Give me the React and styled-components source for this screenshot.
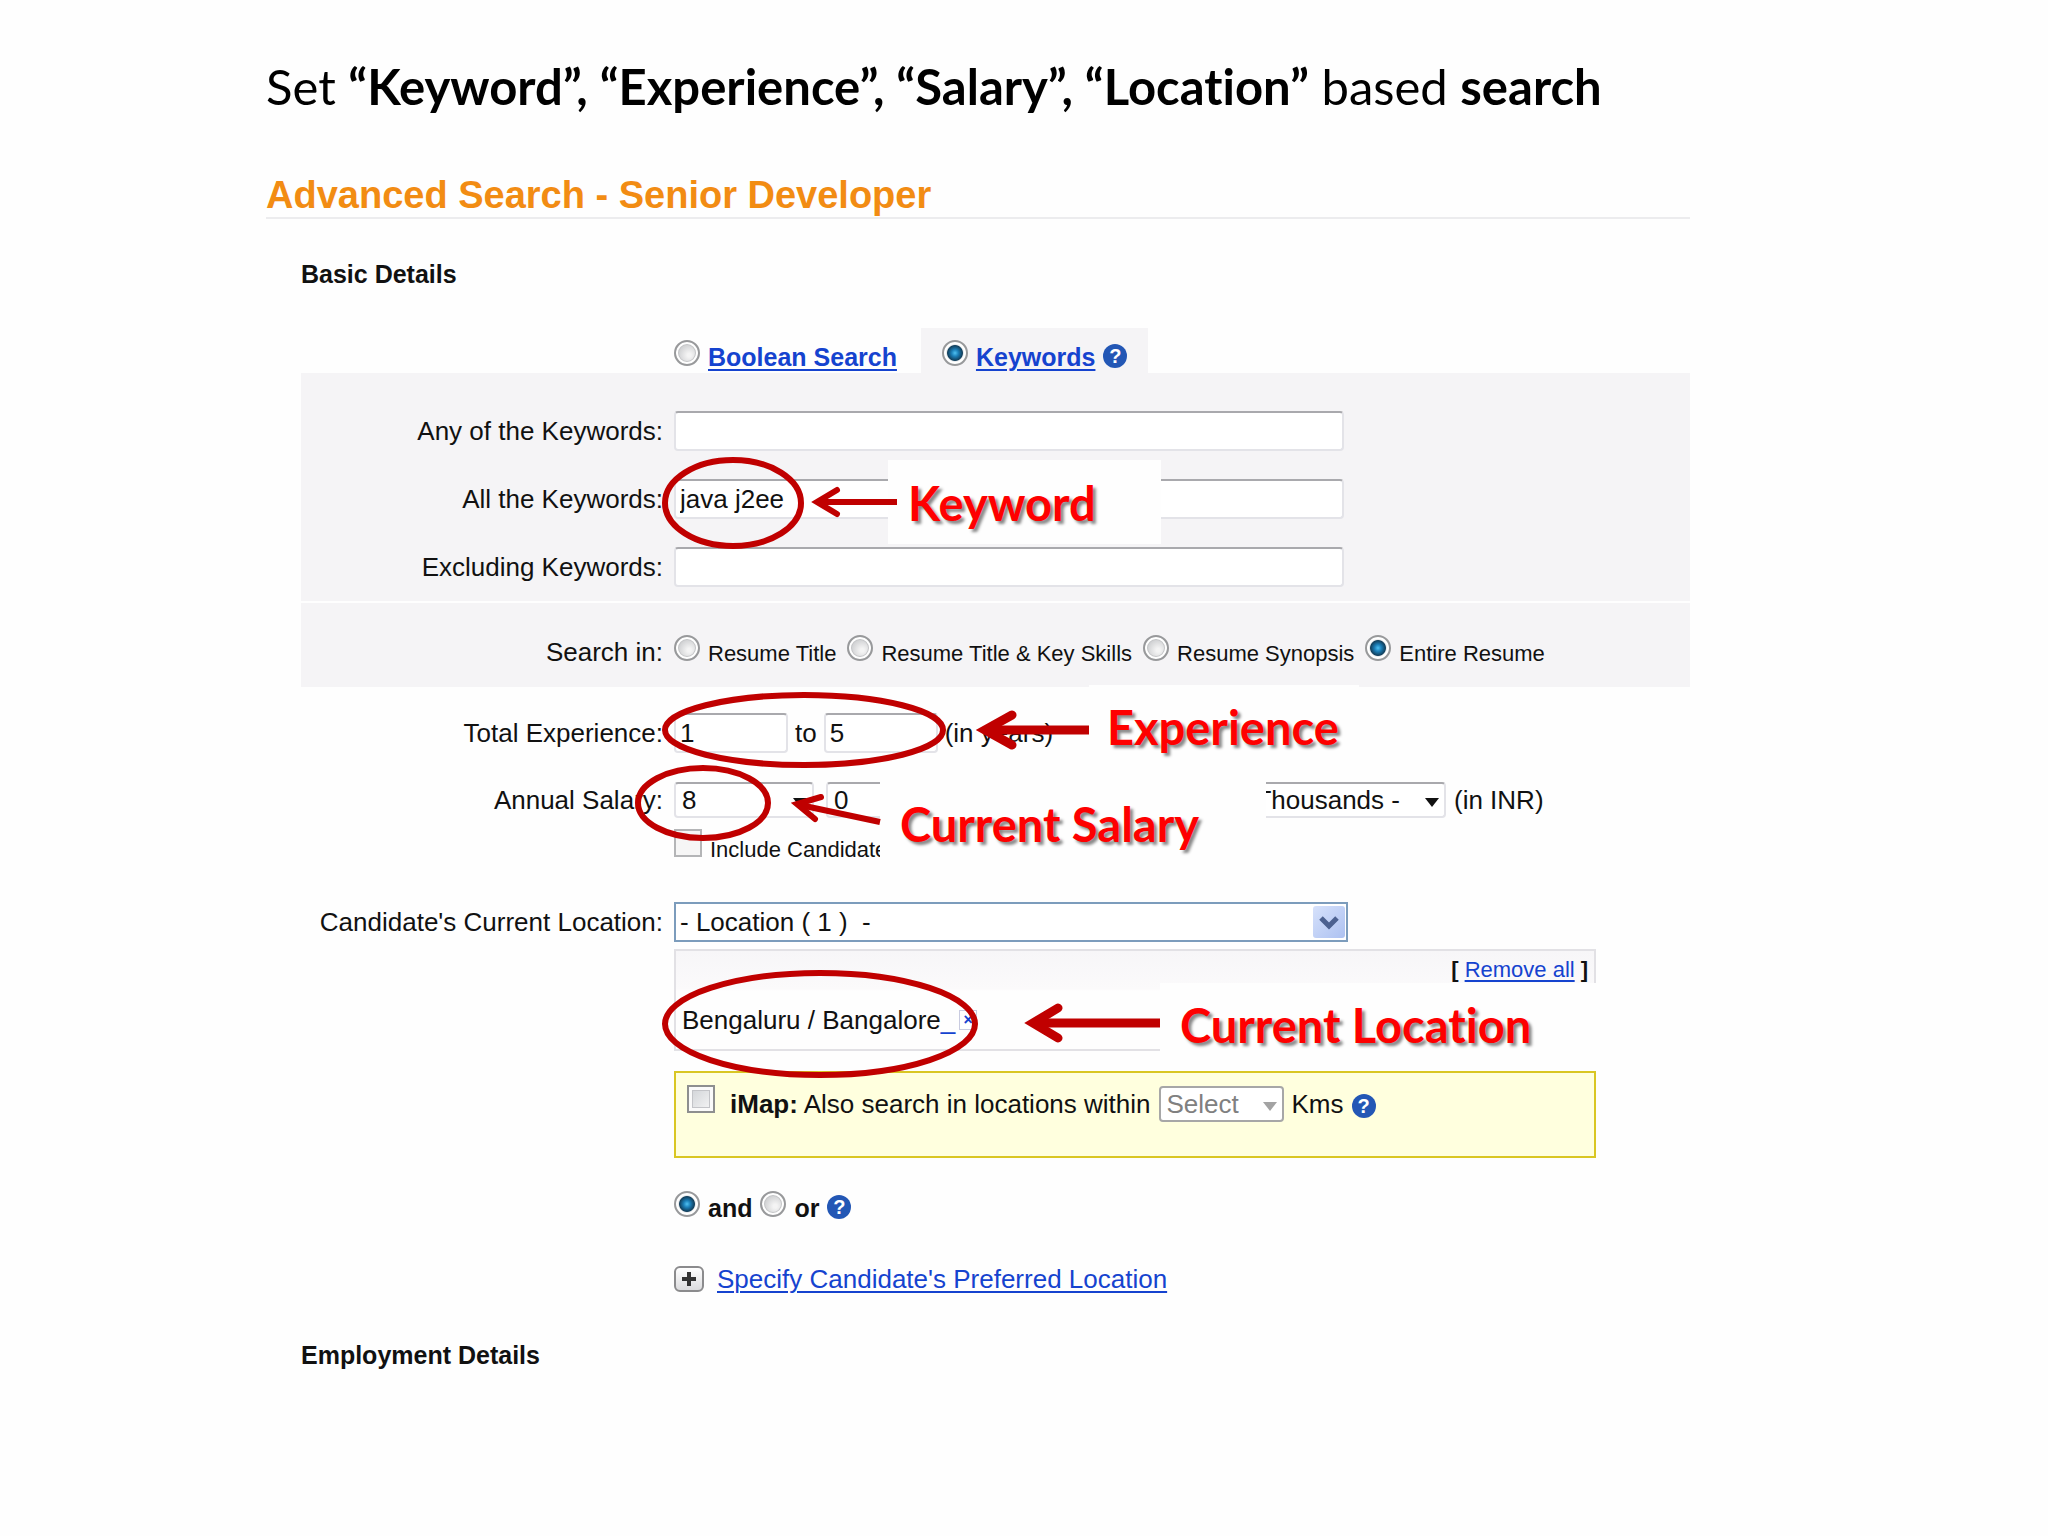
import React from "react";
import styled, { createGlobalStyle } from "styled-components";

const GlobalStyle = createGlobalStyle`
  * {
    box-sizing: border-box;
  }
  body {
    margin: 0;
    background: #fefefe;
    color: #111;
    font-family: "Liberation Sans", Arial, sans-serif;
    font-size: 26px;
    line-height: 30px;
  }
`;

const Slide = styled.main`
  padding: 58px 358px 120px 266px;
`;

const Headline = styled.h1`
  margin: 0;
  font-family: Lato, sans-serif;
  font-size: 49px;
  line-height: 56px;
  font-weight: 400;
  font-variant-ligatures: none;
  color: #000;
  white-space: nowrap;
`;

const PageTitle = styled.h2`
  margin: 60px 0 0;
  border-bottom: 2px solid #ececee;
  font-size: 38px;
  line-height: 43px;
  color: #f28c13;
`;

const Form = styled.form`
  position: relative;
  padding: 40px 0 0 35px;
`;

const SectionTitle = styled.h3`
  margin: ${(props) => props.$top}px 0 0;
  font-size: 25px;
  line-height: 30px;
`;

const Tabs = styled.div`
  display: flex;
  height: 45px;
  margin-top: 39px;
  padding-left: 373px;
`;

const Tab = styled.div`
  display: flex;
  align-items: center;
  gap: 8px;
  padding: ${(props) => (props.$active ? "11px 21px 0 21px" : "11px 24px 0 0")};
  background: ${(props) => (props.$active ? "#f5f4f6" : "transparent")};
`;

const Link = styled.a`
  color: #1543cf;
  text-decoration: underline;
  text-decoration-thickness: 2px;
  text-underline-offset: 3px;
`;

const Panel = styled.div`
  display: flex;
  flex-direction: column;
  gap: 28px;
  margin-bottom: 2px;
  padding: ${(props) => props.$padding};
  background: #f5f4f6;
`;

const Row = styled.div`
  display: grid;
  grid-template-columns: 362px 1fr;
  column-gap: 11px;
  align-items: center;
  min-height: ${(props) => props.$height || 40}px;
  margin-top: ${(props) => props.$top || 0}px;
`;

const Label = styled.label`
  text-align: right;
  white-space: nowrap;
`;

const Controls = styled.div`
  display: flex;
  align-items: center;
  grid-column: 2;
  gap: ${(props) => props.$gap || 8}px;
  white-space: nowrap;
`;

const TextBox = styled.input`
  width: ${(props) => props.$width}px;
  height: 40px;
  padding: 0 4px;
  border: 2px solid #e3e3e8;
  border-top-color: #a9a9ad;
  border-radius: 4px;
  background: #fff;
  color: #111;
  font: inherit;
`;

// controls sit on the text baseline
const Choice = styled.label`
  display: flex;
  align-items: baseline;
  gap: 8px;
  font-size: ${(props) => (props.$bold ? 25 : 22)}px;
  font-weight: ${(props) => (props.$bold ? 700 : 400)};
`;

const Radio = styled.input.attrs({ type: "radio" })`
  appearance: none;
  flex: none;
  width: 26px;
  height: 26px;
  margin: 0;
  border: 2px solid #98999b;
  border-radius: 50%;
  background: radial-gradient(circle at 60% 60%, #f4f4f4 10%, #cfd0d2 60%);
  box-shadow: inset 0 0 0 2px #fff, inset 0 0 0 3px #c4c5c7;
  &:checked {
    background: radial-gradient(
      circle,
      #4fc1f2 0,
      #1c7fb8 22%,
      #123f5c 48%,
      #e8eaec 54%
    );
    box-shadow: inset 0 0 0 2px #fff;
  }
`;

const Checkbox = styled.input.attrs({ type: "checkbox" })`
  appearance: none;
  flex: none;
  width: 28px;
  height: 28px;
  margin: 0;
  border: 2px solid ${(props) => (props.$strong ? "#8e8f8f" : "#b4b5b7")};
  background: ${(props) =>
    props.$strong ? "linear-gradient(135deg, #cdd0d4, #f8f8f8)" : "#f6f6f6"};
  box-shadow: ${(props) =>
    props.$strong
      ? "inset 0 0 0 3px #fafafa, inset 0 0 0 4px #c3c4c8"
      : "none"};
`;

const HelpButton = styled.button`
  flex: none;
  width: 24px;
  height: 24px;
  padding: 0;
  border: 0;
  border-radius: 50%;
  background: #2357b5;
  color: #fff;
  font: 700 20px/24px "Liberation Sans", Arial, sans-serif;
`;

const SelectFrame = styled.div`
  display: grid;
  align-items: center;
  width: ${(props) => props.$width}px;
  margin-left: ${(props) => props.$left || 0}px;
  > * {
    grid-area: 1 / 1;
  }
  > svg {
    justify-self: end;
    margin-right: ${(props) => (props.$location ? 3 : 6)}px;
    pointer-events: none;
  }
`;

const Select = styled.select`
  appearance: none;
  width: 100%;
  height: ${(props) => (props.$location ? 40 : 36)}px;
  padding: 0 6px;
  border: 2px solid #e3e3e8;
  border-top-color: #a9a9ad;
  border-radius: 4px;
  background: #fff;
  color: #111;
  font: inherit;
  opacity: 1;
  ${(props) =>
    props.$location &&
    "padding: 0 4px; border-color: #7c9cbc; border-radius: 0;"}
  &:disabled {
    border-color: #a7a7a7;
    color: #808080;
  }
`;

const ChosenBox = styled.div`
  width: 922px;
  height: 102px;
  margin: 7px 0 0 373px;
  border: 2px solid #e2e1e5;
  background: linear-gradient(#f7f6f8, #fbfafb 38px, #fefefe 40px);
`;

const RemoveAll = styled.div`
  display: flex;
  justify-content: flex-end;
  gap: 6px;
  padding: 4px 6px 0 0;
  font-size: 22px;
`;

const ChosenItem = styled.div`
  display: flex;
  align-items: center;
  padding: 20px 0 0 6px;
`;

const RemoveLink = styled.a`
  color: #1543cf;
  text-decoration: none;
`;

const RemoveButton = styled.button`
  width: 18px;
  height: 20px;
  margin-left: 4px;
  padding: 0;
  border: 1px solid #c9cbe0;
  background: #fff;
  color: #1543cf;
  font: 700 16px/16px "Liberation Sans", Arial, sans-serif;
`;

const MapBox = styled.div`
  display: flex;
  align-items: baseline;
  gap: 8px;
  width: 922px;
  height: 87px;
  margin: 20px 0 0 373px;
  padding: 12px 11px 0;
  border: 2px solid #d9c623;
  background: #ffffde;
  white-space: nowrap;
`;

const MapLabel = styled.label`
  margin-left: 7px;
`;

const ExpandButton = styled.button`
  display: flex;
  align-items: center;
  justify-content: center;
  width: 30px;
  height: 26px;
  margin-right: 5px;
  padding: 0;
  border: 2px solid #8b8b8d;
  border-radius: 6px;
  background: linear-gradient(#fff, #dcdcde);
`;

// red marks drawn over the form
const Marks = styled.svg`
  position: absolute;
  top: 0;
  left: 0;
  overflow: visible;
  pointer-events: none;
  fill: none;
  stroke: #c00000;
`;

const Callout = styled.div`
  position: absolute;
  top: ${(props) => props.$y}px;
  left: ${(props) => props.$x}px;
  width: ${(props) => props.$width}px;
  height: ${(props) => props.$height}px;
  padding: ${(props) => props.$padding};
  background: #fefefe;
  color: #fe0000;
  font-family: Lato, sans-serif;
  font-size: 47px;
  font-weight: 700;
  font-variant-ligatures: none;
  line-height: 52px;
  text-shadow: 3px 3px 3px #888;
  white-space: nowrap;
`;

const DownArrow = ({ color = "#111" }) => (
  <svg width="16" height="16" viewBox="0 0 16 16">
    <path d="M1 6h14L8 15z" fill={color} />
  </svg>
);

const SquareArrow = () => (
  <svg width="32" height="32" viewBox="0 0 32 32">
    <defs>
      <linearGradient id="arrowFill" x1="0" y1="0" x2="1" y2="1">
        <stop offset="0" stopColor="#d6e1fb" />
        <stop offset="1" stopColor="#adc1f1" />
      </linearGradient>
    </defs>
    <rect width="32" height="32" rx="3" fill="url(#arrowFill)" />
    <path d="M8 12l8 8 8-8" fill="none" stroke="#4c6190" strokeWidth="5" />
  </svg>
);

const searchAreas = [
  "Resume Title",
  "Resume Title & Key Skills",
  "Resume Synopsis",
  "Entire Resume",
];

const Help = () => (
  <HelpButton type="button" aria-label="Help">
    ?
  </HelpButton>
);

const App = () => {
  return (
    <Slide>
      <GlobalStyle />
      <Headline>
        Set <b>“Keyword”, “Experience”, “Salary”, “Location”</b> based{" "}
        <b>search</b>
      </Headline>
      <PageTitle>Advanced Search - Senior Developer</PageTitle>

      <Form>
        <SectionTitle $top={0}>Basic Details</SectionTitle>

        <Tabs>
          <Tab>
            <Choice $bold>
              <Radio name="mode" />
              <Link href="#boolean">Boolean Search</Link>
            </Choice>
          </Tab>
          <Tab $active>
            <Choice $bold>
              <Radio name="mode" defaultChecked />
              <Link href="#keywords">Keywords</Link>
            </Choice>
            <Help />
          </Tab>
        </Tabs>

        <Panel $padding="38px 0 14px">
          <Row>
            <Label htmlFor="any">Any of the Keywords:</Label>
            <TextBox id="any" $width={670} />
          </Row>
          <Row>
            <Label htmlFor="all">All the Keywords:</Label>
            <TextBox id="all" $width={670} defaultValue="java j2ee" />
          </Row>
          <Row>
            <Label htmlFor="excluding">Excluding Keywords:</Label>
            <TextBox id="excluding" $width={670} />
          </Row>
        </Panel>
        <Panel $padding="29px 0 15px">
          <Row>
            <Label as="span">Search in:</Label>
            <Controls $gap={11}>
              {searchAreas.map((area) => (
                <Choice key={area}>
                  <Radio name="area" defaultChecked={area === "Entire Resume"} />
                  {area}
                </Choice>
              ))}
            </Controls>
          </Row>
        </Panel>

        <Row $top={26}>
          <Label htmlFor="expFrom">Total Experience:</Label>
          <Controls $gap={7}>
            <TextBox id="expFrom" $width={114} defaultValue="1" />
            <span>to</span>
            <TextBox aria-label="Experience to" $width={114} defaultValue="5" />
            <span>(in years)</span>
          </Controls>
        </Row>

        <Row $top={29} $height={36}>
          <Label htmlFor="lakhs">Annual Salary:</Label>
          <Controls>
            <SelectFrame $width={140}>
              <Select id="lakhs">
                <option>8</option>
              </Select>
              <DownArrow />
            </SelectFrame>
            <SelectFrame $width={140} $left={4}>
              <Select aria-label="Thousands from">
                <option>0</option>
              </Select>
              <DownArrow />
            </SelectFrame>
            <SelectFrame $width={214} $left={258}>
              <Select aria-label="Thousands to">
                <option>- Thousands -</option>
              </Select>
              <DownArrow />
            </SelectFrame>
            <span>(in INR)</span>
          </Controls>
        </Row>

        <Row $top={11} $height={34}>
          <Controls>
            <Choice>
              <Checkbox />
              Include Candidates
            </Choice>
          </Controls>
        </Row>

        <Row $top={37}>
          <Label htmlFor="location">Candidate's Current Location:</Label>
          <SelectFrame $width={674} $location>
            <Select id="location" $location>
              <option>- Location ( 1 ) &nbsp;-</option>
            </Select>
            <SquareArrow />
          </SelectFrame>
        </Row>

        <ChosenBox>
          <RemoveAll>
            <b>[</b>
            <Link href="#remove">Remove all</Link>
            <b>]</b>
          </RemoveAll>
          <ChosenItem>
            Bengaluru / Bangalore
            <RemoveLink href="#bangalore">_</RemoveLink>
            <RemoveButton type="button" aria-label="Remove Bangalore">
              ×
            </RemoveButton>
          </ChosenItem>
        </ChosenBox>

        <MapBox>
          <Checkbox id="imap" $strong />
          <MapLabel htmlFor="imap">
            <b>iMap:</b> Also search in locations within
          </MapLabel>
          <SelectFrame $width={125}>
            <Select disabled aria-label="Distance">
              <option>Select</option>
            </Select>
            <DownArrow color="#a3a3a3" />
          </SelectFrame>
          <span>Kms</span>
          <Help />
        </MapBox>

        <Row $top={33} $height={32}>
          <Controls>
            <Choice $bold>
              <Radio name="join" defaultChecked />
              and
            </Choice>
            <Choice $bold>
              <Radio name="join" />
              or
            </Choice>
            <Help />
          </Controls>
        </Row>

        <Row $top={41} $height={30}>
          <Controls>
            <ExpandButton type="button" aria-label="Expand">
              <svg width="14" height="14" viewBox="0 0 14 14">
                <path d="M7 0v14M0 7h14" stroke="#333" strokeWidth="4" />
              </svg>
            </ExpandButton>
            <Link href="#preferred">Specify Candidate's Preferred Location</Link>
          </Controls>
        </Row>

        <SectionTitle $top={46}>Employment Details</SectionTitle>

        <Callout $x={622} $y={241} $width={273} $height={84} $padding="17px 20px">
          Keyword
        </Callout>
        <Callout $x={823} $y={466} $width={270} $height={84} $padding="16px 18px">
          Experience
        </Callout>
        <Callout $x={614} $y={560} $width={386} $height={84} $padding="19px 20px">
          Current Salary
        </Callout>
        <Callout $x={894} $y={764} $width={440} $height={84} $padding="16px 20px">
          Current Location
        </Callout>

        <Marks width="1" height="1">
          <g strokeWidth="6">
            <ellipse cx="467" cy="284" rx="68" ry="43" />
            <ellipse cx="538" cy="511" rx="139" ry="35" />
            <ellipse cx="437" cy="584" rx="65" ry="35" />
            <ellipse cx="554" cy="805" rx="155" ry="51" />
          </g>
          <g strokeWidth="6">
            <path d="M631 283H552" />
            <path d="M571 271L551 283L571 295" strokeLinecap="round" />
            <path d="M614 603L534 586" />
            <path d="M555 578L531 585L549 600" strokeLinecap="round" />
          </g>
          <g strokeWidth="9">
            <path d="M823 511H720" />
            <path d="M746 496L719 511L746 526" strokeLinecap="round" />
            <path d="M894 804H767" />
            <path d="M792 789L767 804L792 819" strokeLinecap="round" />
          </g>
        </Marks>
      </Form>
    </Slide>
  );
};

export default App;
